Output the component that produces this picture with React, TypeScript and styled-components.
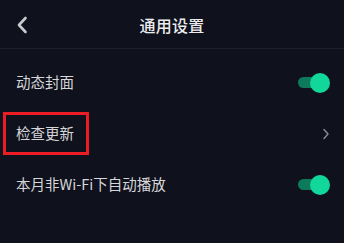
import React from "react";
import styled, { createGlobalStyle } from "styled-components";

const GlobalStyle = createGlobalStyle`
	html, body {
		margin: 0;
		padding: 0;
		background: #0f111c;
	}
	body {
		font-family: "Noto Sans CJK SC", "Noto Sans", sans-serif;
		-webkit-font-smoothing: antialiased;
	}
`;

const Screen = styled.div`
	width: 344px;
	height: 243px;
	background: #0f111c;
	display: flex;
	flex-direction: column;
	overflow: hidden;
`;

const Header = styled.div`
	position: relative;
	height: 48px;
	display: flex;
	align-items: center;
	justify-content: center;
	border-bottom: 1px solid #1f212c;
	flex-shrink: 0;
`;

const BackButton = styled.button`
	position: absolute;
	left: 12px;
	top: 14px;
	width: 20px;
	height: 22px;
	padding: 0;
	border: none;
	background: none;
	display: flex;
	align-items: center;
	justify-content: center;
`;

const Title = styled.h1`
	margin: 0;
	font-size: 16px;
	font-weight: 500;
	color: #ececef;
	letter-spacing: 0.3px;
	line-height: 1;
	padding-top: 1px;
`;

const List = styled.div`
	display: flex;
	flex-direction: column;
	padding-top: 8px;
`;

const Row = styled.div`
	position: relative;
	height: 51px;
	padding: 0 14px 0 16px;
	display: flex;
	align-items: center;
	justify-content: space-between;
`;

const Label = styled.span`
	font-size: 14.5px;
	color: #d6d7db;
	line-height: 1;
`;

const Toggle = styled.div<{ on: boolean }>`
	position: relative;
	width: 32px;
	height: 20px;
	margin-right: 0;
	&::before {
		content: "";
		position: absolute;
		left: 0;
		top: 4.5px;
		width: 26px;
		height: 11px;
		border-radius: 6px;
		background: ${({ on }) => (on ? "#0c7a5b" : "#3a3c46")};
	}
	&::after {
		content: "";
		position: absolute;
		top: 0;
		left: ${({ on }) => (on ? "12px" : "0")};
		width: 20px;
		height: 20px;
		border-radius: 50%;
		background: ${({ on }) => (on ? "#12d79b" : "#c9cacf")};
	}
`;

const Chevron = styled.svg`
	margin-right: 0;
`;

const Highlight = styled.div`
	position: absolute;
	left: 3px;
	top: 4px;
	width: 86px;
	height: 43px;
	border: 3.5px solid #ec1c24;
	box-sizing: border-box;
	pointer-events: none;
`;

export default function App() {
	return (
		<>
			<GlobalStyle />
			<Screen>
				<Header>
					<BackButton aria-label="back">
						<svg width="12" height="18" viewBox="0 0 12 18">
							<path
								d="M9.5 2 L3 9 L9.5 16"
								fill="none"
								stroke="#c9cace"
								strokeWidth="2.6"
								strokeLinecap="round"
								strokeLinejoin="round"
							/>
						</svg>
					</BackButton>
					<Title>通用设置</Title>
				</Header>
				<List>
					<Row>
						<Label>动态封面</Label>
						<Toggle on={true} />
					</Row>
					<Row>
						<Label>检查更新</Label>
						<Chevron width="8" height="12" viewBox="0 0 8 12">
							<path
								d="M2 1.5 L6 6 L2 10.5"
								fill="none"
								stroke="#8b8e97"
								strokeWidth="1.4"
								strokeLinecap="round"
								strokeLinejoin="round"
							/>
						</Chevron>
						<Highlight />
					</Row>
					<Row>
						<Label>本月非Wi-Fi下自动播放</Label>
						<Toggle on={true} />
					</Row>
				</List>
			</Screen>
		</>
	);
}
